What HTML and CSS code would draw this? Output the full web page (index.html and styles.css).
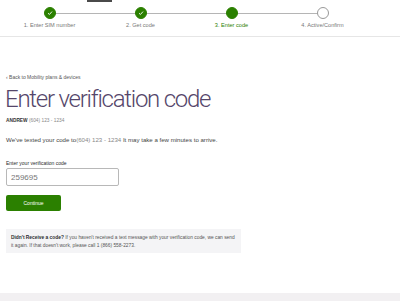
FILE: index.html
```html
<!DOCTYPE html>
<html lang="en">
<head>
    <meta charset="UTF-8">
    <meta name="viewport" content="width=device-width, initial-scale=1.0">
    <title>Enter verification code</title>
    <link rel="stylesheet" href="styles.css">
</head>
<body>
<header class="top">
    <div class="tab-mark"></div>
    <ol class="steps">
        <li class="step done">
            <span class="dot"><svg viewBox="0 0 12 12" width="6" height="6"><path d="M2 6.3 L4.8 9 L10 3.2" fill="none" stroke="#fff" stroke-width="1.8"/></svg></span>
            <span class="step-label">1. Enter SIM number</span>
        </li>
        <li class="step done">
            <span class="dot"><svg viewBox="0 0 12 12" width="6" height="6"><path d="M2 6.3 L4.8 9 L10 3.2" fill="none" stroke="#fff" stroke-width="1.8"/></svg></span>
            <span class="step-label">2. Get code</span>
        </li>
        <li class="step current">
            <span class="dot"></span>
            <span class="step-label">3. Enter code</span>
        </li>
        <li class="step">
            <span class="dot"></span>
            <span class="step-label">4. Active/Confirm</span>
        </li>
    </ol>
</header>

<main class="page">
    <a class="back" href="#">&lsaquo; Back to Mobility plans &amp; devices</a>
    <h1>Enter verification code</h1>
    <p class="account"><b>ANDREW</b> (604) 123 - 1234</p>
    <p class="intro">We've texted your code to<span class="num">(604) 123 - 1234</span> It may take a few minutes to arrive.</p>

    <form class="code-form">
        <label for="code">Enter your verification code</label>
        <input id="code" value="259695">
        <button type="button" class="btn">Continue</button>
    </form>

    <div class="notice">
        <b>Didn't Receive a code?</b> If you haven't received a text message with your verification code, we can send it again. If that doesn't work, please call 1 (866) 558-2273.
    </div>
</main>

<footer class="foot"></footer>
</body>
</html>
```

FILE: styles.css
```css
body {
    margin: 0;
    font-family: "Liberation Sans", Arial, sans-serif;
    color: #2a2c2e;
    background: #fff;
    height: 301px;
    display: flex;
    flex-direction: column;
}

.top {
    border-bottom: 1px solid #e6e6e6;
    height: 36px;
}

.tab-mark {
    margin-left: 87px;
    width: 25px;
    height: 2px;
    background: #4a4a4a;
}

.steps {
    list-style: none;
    margin: 0;
    padding: 5px 0 0 4px;
    display: flex;
}

.step {
    width: 91px;
    display: flex;
    flex-direction: column;
    align-items: center;
    position: relative;
}

.step::before, .step::after {
    content: "";
    position: absolute;
    top: 6px;
    height: 1px;
    background: #b5b5b5;
    width: 50%;
}

.step::before { left: 0; }
.step::after { right: 0; }
.step:first-child::before, .step:last-child::after { display: none; }

.dot {
    width: 12px;
    height: 12px;
    border-radius: 50%;
    box-sizing: border-box;
    border: 1px solid #999;
    background: #fff;
    display: flex;
    align-items: center;
    justify-content: center;
    position: relative;
    z-index: 1;
}

.done .dot, .current .dot {
    background: #2b8000;
    border-color: #2b8000;
}

.step-label {
    margin-top: 3px;
    font-size: 5.6px;
    color: #777;
}

.current .step-label { color: #2b8000; }

.page {
    flex: 1;
    padding: 37px 6px 0;
}

.back {
    display: block;
    font-size: 5px;
    color: #555;
    text-decoration: none;
}

h1 {
    margin: 4px 0 0 -1px;
    font-family: Roboto, "Liberation Sans", sans-serif;
    font-weight: 300;
    font-size: 24px;
    letter-spacing: -1.25px;
    line-height: 30px;
    color: #55466a;
}

.account {
    margin: 4px 0 0;
    font-size: 4.8px;
    color: #888;
}

.account b { color: #333; }

.intro {
    margin: 13px 0 0;
    font-size: 6.1px;
    color: #444;
}

.num { color: #888; }

.code-form {
    margin-top: 17px;
    display: flex;
    flex-direction: column;
    align-items: flex-start;
}

.code-form label {
    font-size: 5px;
    color: #2a2c2e;
}

.code-form input {
    margin-top: 2px;
    width: 113px;
    height: 18px;
    box-sizing: border-box;
    border: 1px solid #b8b8b8;
    border-radius: 2px;
    padding: 0 4px;
    font-family: "Liberation Sans", Arial, sans-serif;
    font-size: 8px;
    color: #777;
}

.btn {
    margin-top: 9px;
    width: 55px;
    height: 16px;
    border: none;
    border-radius: 2px;
    background: #2b8000;
    color: #fff;
    font-family: "Liberation Sans", Arial, sans-serif;
    font-size: 5px;
}

.notice {
    margin-top: 18px;
    width: 225px;
    padding: 5px 5px 4px;
    background: #f4f4f6;
    font-size: 4.85px;
    line-height: 7.5px;
    color: #555;
}

.notice b { color: #2a2c2e; }

.foot {
    height: 8px;
    background: #f2f0f2;
}
```
